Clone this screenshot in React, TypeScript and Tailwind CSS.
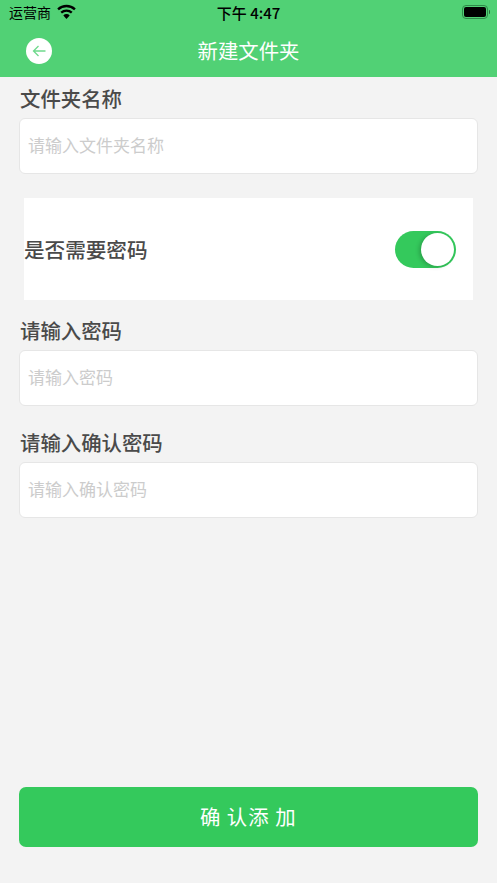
import React from "react";

const font = { fontFamily: '"Noto Sans CJK SC", "Liberation Sans", sans-serif' };

function Field({ label, placeholder, className }: { label: string; placeholder: string; className: string }) {
    return (
        <div className={`mr-[19.5px] ml-[19px] ${className}`}>
            <div className="ml-px text-[20.4px] leading-[31px] font-medium text-[#4a4a4a]">{label}</div>
            <div className="mt-[4px] flex h-[56px] items-center rounded-[6px] border border-[#e6e6e6] bg-white pb-[2px] pl-2 text-[17px] text-[#cccccc]">
                {placeholder}
            </div>
        </div>
    );
}

export default function App() {
    return (
        <div className="flex h-[883px] w-[497px] flex-col overflow-hidden bg-[#f3f3f3]" style={font}>
            <div className="h-[77px] shrink-0 bg-[#51d175]">
                <div className="grid h-[26px] grid-cols-[1fr_auto_1fr] items-center pr-[9px] pl-[9px]">
                    <div className="flex items-center gap-[6px]">
                        <span className="-mt-[2px] text-[14px] leading-none text-black">运营商</span>
                        <svg width="19" height="15" viewBox="0 0 18 14" className="-mt-[3px]">
                            <path d="M1 5 A11.5 11.5 0 0 1 17 5" fill="none" stroke="#000" strokeWidth="2.2" />
                            <path d="M4 8 A7.5 7.5 0 0 1 14 8" fill="none" stroke="#000" strokeWidth="2.2" />
                            <path d="M6 10.8 A4 4 0 0 1 12 10.8 L9 14 Z" fill="#000" />
                        </svg>
                    </div>
                    <span className="-mt-[2px] text-[15px] leading-none font-medium text-black">下午 4:47</span>
                    <div className="-mt-[2px] -mr-[2px] flex items-center justify-end">
                        <div className="flex h-[14px] w-[26px] items-center rounded-[4px] border border-[#2f8a4a] p-px">
                            <div className="h-full w-full rounded-[2px] bg-black" />
                        </div>
                        <div className="ml-px h-[4px] w-px rounded-r bg-[#2a6b3e]" />
                    </div>
                </div>
                <div className="relative flex h-[51px] items-center justify-center">
                    <div className="absolute top-[12px] left-[26px] flex h-[26px] w-[26px] items-center justify-center rounded-full bg-white">
                        <svg width="14" height="12" viewBox="0 0 14 12" fill="none" stroke="#6fd98c" strokeWidth="1.3">
                            <path d="M13.5 6 H1.5 M6.5 1 L1.5 6 L6.5 11" />
                        </svg>
                    </div>
                    <span className="-mt-[3px] text-[20.4px] text-white">新建文件夹</span>
                </div>
            </div>

            <Field label="文件夹名称" placeholder="请输入文件夹名称" className="mt-[6px]" />

            <div className="mx-[24px] mt-[24px] flex h-[102px] items-center justify-between bg-white pr-[17px]">
                <span className="text-[20.6px] font-medium text-[#4a4a4a]">是否需要密码</span>
                <div className="flex h-[37px] w-[61px] items-center justify-end rounded-full bg-[#34c95c] pr-[2px]">
                    <div className="h-[33px] w-[33px] rounded-full bg-white shadow-[-2px_1px_4px_rgba(0,0,0,0.2)]" />
                </div>
            </div>

            <Field label="请输入密码" placeholder="请输入密码" className="mt-[15px]" />
            <Field label="请输入确认密码" placeholder="请输入确认密码" className="mt-[21px]" />

            <div className="mt-auto mr-[19.5px] mb-[36px] ml-[19px] flex h-[60px] items-center justify-center rounded-[7px] bg-[#34c95c] pb-[2px] text-[20.4px] tracking-[1px] text-white">
                确 认添 加
            </div>
        </div>
    );
}
